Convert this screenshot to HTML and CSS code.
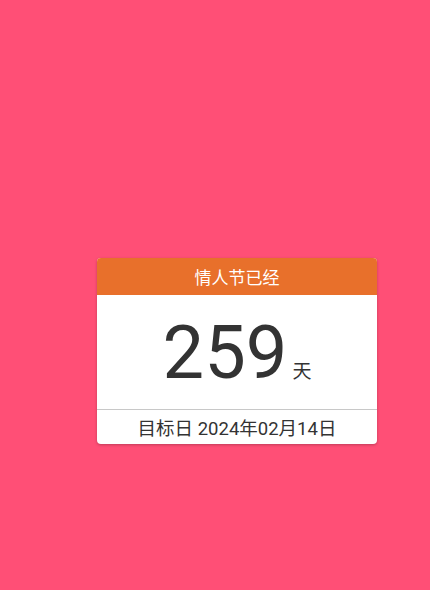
FILE: index.html
```html
<!DOCTYPE html>
<html lang="zh">
<head>
<meta charset="utf-8">
<link rel="stylesheet" href="styles.css">
</head>
<body>
<div class="card">
  <div class="card-header">情人节已经</div>
  <div class="card-body">
    <span class="num">259</span><span class="unit">天</span>
  </div>
  <div class="card-footer">目标日 2024年02月14日</div>
</div>
</body>
</html>
```

FILE: styles.css
```css
html, body {
  margin: 0;
  padding: 0;
  height: 100%;
}
body {
  background: #ff4f76;
  font-family: Roboto, "Noto Sans CJK SC", sans-serif;
  padding: 258px 0 0 97px;
  box-sizing: border-box;
}
.card {
  width: 280px;
  background: #fff;
  border-radius: 4px;
  overflow: hidden;
  box-shadow: 0 1px 3px rgba(0,0,0,0.25);
}
.card-header {
  background: #e8702b;
  color: #fff;
  height: 37px;
  display: flex;
  align-items: center;
  justify-content: center;
  font-size: 17px;
}
.card-body {
  height: 115px;
  display: flex;
  align-items: baseline;
  justify-content: center;
  border-bottom: 1px solid #c8c8c8;
  box-sizing: border-box;
  padding-top: 14px;
  color: #333;
}
.num {
  font-size: 74px;
  line-height: 1.2;
}
.unit {
  font-size: 19px;
  margin-left: 5px;
}
.card-footer {
  height: 34px;
  display: flex;
  align-items: center;
  justify-content: center;
  font-size: 18.5px;
  color: #333;
}
```
